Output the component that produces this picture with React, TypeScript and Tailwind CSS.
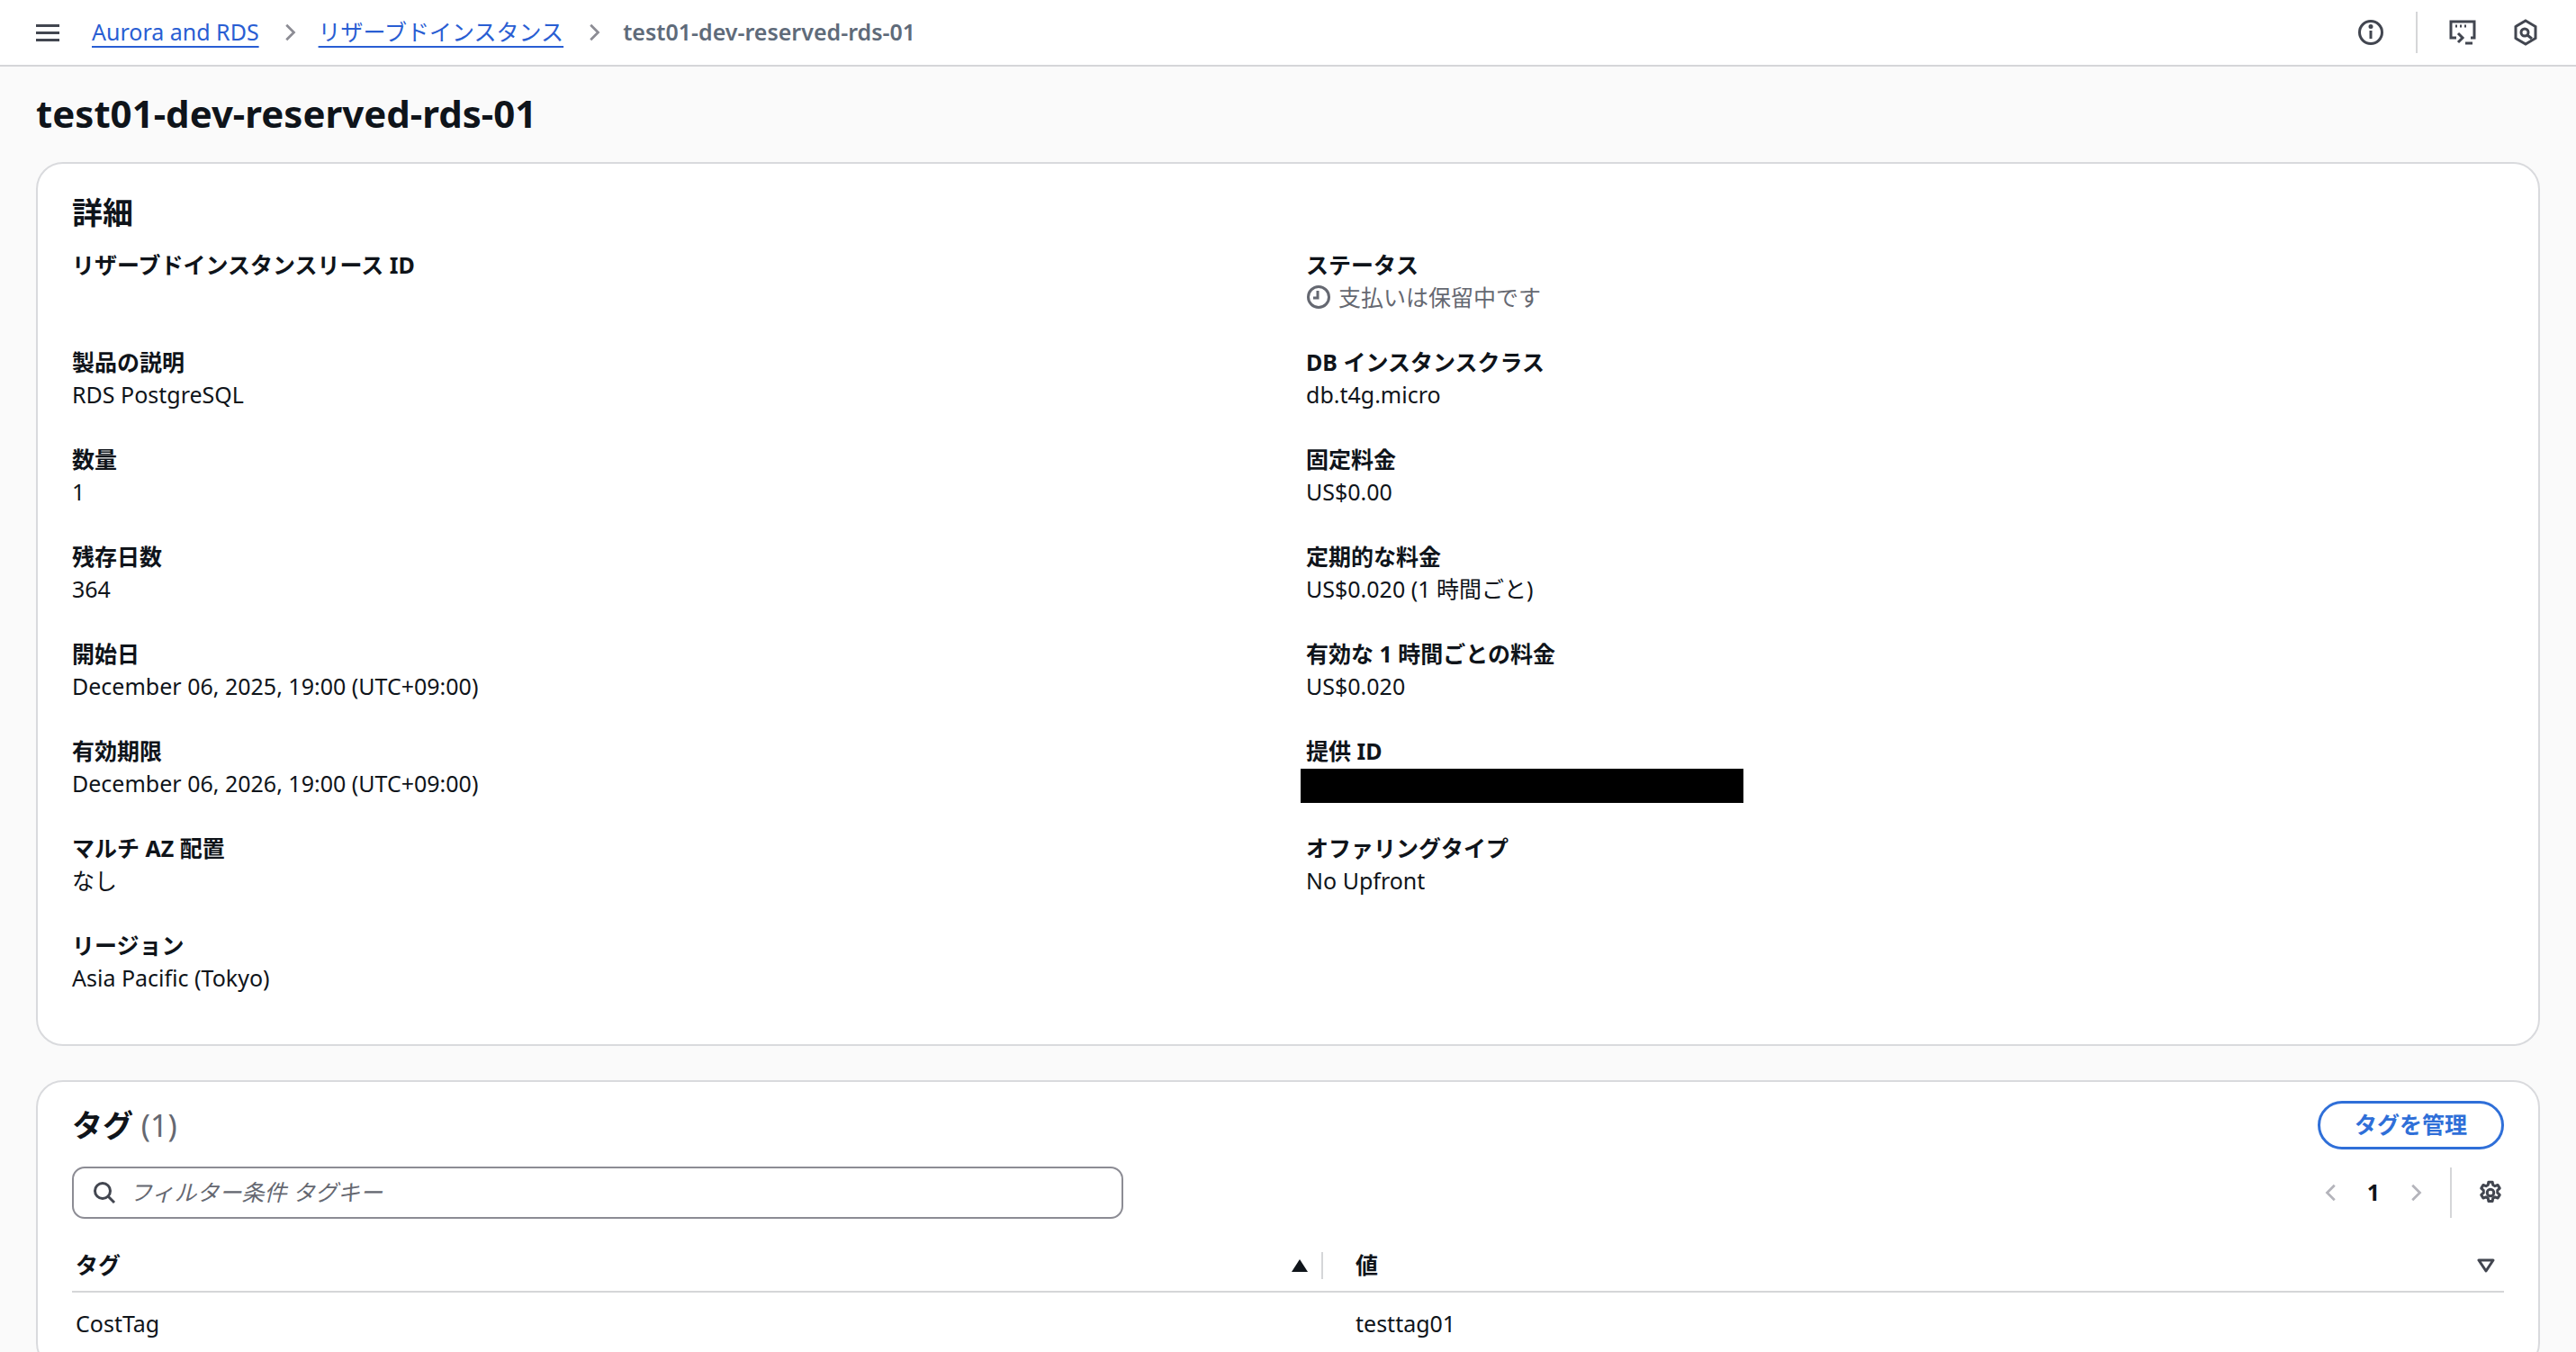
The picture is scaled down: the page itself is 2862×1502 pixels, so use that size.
import React from 'react';

const font = { fontFamily: '"Noto Sans", "Noto Sans CJK JP", sans-serif' };

const left: [string, string][] = [
  ['リザーブドインスタンスリース ID', ''],
  ['製品の説明', 'RDS PostgreSQL'],
  ['数量', '1'],
  ['残存日数', '364'],
  ['開始日', 'December 06, 2025, 19:00 (UTC+09:00)'],
  ['有効期限', 'December 06, 2026, 19:00 (UTC+09:00)'],
  ['マルチ AZ 配置', 'なし'],
  ['リージョン', 'Asia Pacific (Tokyo)'],
];

const right: [string, string][] = [
  ['DB インスタンスクラス', 'db.t4g.micro'],
  ['固定料金', 'US$0.00'],
  ['定期的な料金', 'US$0.020 (1 時間ごと)'],
  ['有効な 1 時間ごとの料金', 'US$0.020'],
];

const Field = ({ label, children }: { label: string; children?: React.ReactNode }) => (
  <div className="h-[108px]">
    <div className="text-[25px] leading-[36px] font-bold text-[#0f141a]">{label}</div>
    <div className="text-[25px] leading-[36px] text-[#0f141a]">{children}</div>
  </div>
);

const Chevron = ({ dir = 'right', color = '#8c8c94' }: { dir?: 'left' | 'right'; color?: string }) => (
  <svg width="22" height="22" viewBox="0 0 16 16" fill="none" stroke={color} strokeWidth="2">
    {dir === 'right' ? <path d="M6 2l6 6-6 6" /> : <path d="M10 2L4 8l6 6" />}
  </svg>
);

export default function App() {
  return (
    <div className="min-h-[1502px] bg-[#fafafa]" style={font}>
      {/* top bar */}
      <div className="h-[74px] bg-white border-b-2 border-[#d5d6d8] flex items-center px-[40px]">
        <svg width="28" height="24" viewBox="0 0 28 24" fill="#424650">
          <rect x="0" y="3" width="26" height="3" />
          <rect x="0" y="11" width="26" height="3" />
          <rect x="0" y="19" width="26" height="3" />
        </svg>
        <div className="flex items-center gap-[22px] ml-[34px] text-[25px]">
          <a className="text-[#295ed3] underline underline-offset-[6px]">Aurora and RDS</a>
          <Chevron />
          <a className="text-[#295ed3] underline underline-offset-[6px]">リザーブドインスタンス</a>
          <Chevron />
          <span className="text-[#5f6b7a] font-semibold">test01-dev-reserved-rds-01</span>
        </div>
        <div className="ml-auto flex items-center h-full">
          <svg width="32" height="32" viewBox="0 0 32 32" fill="none" stroke="#424650" strokeWidth="3">
            <circle cx="16" cy="16" r="12.5" />
            <path d="M16 14v9" />
            <circle cx="16" cy="9.5" r="1" fill="#424650" />
          </svg>
          <div className="w-[2px] h-[46px] bg-[#d5d6d8] mx-[34px]" />
          <svg width="32" height="32" viewBox="0 0 32 32" fill="none" stroke="#424650" strokeWidth="3">
            <path d="M9 22H3V4h26v18h-4" />
            <path d="M8 9h2M13 9h2M18 9h2" />
            <path d="M11 17l5 5-5 5" />
            <path d="M19 28h8" />
          </svg>
          <svg className="ml-[38px]" width="32" height="32" viewBox="0 0 32 32" fill="none" stroke="#424650" strokeWidth="3">
            <path d="M16 3l11 6.5v13L16 29 5 22.5v-13z" />
            <circle cx="15" cy="16" r="4" />
            <path d="M18 19l5 4" />
          </svg>
        </div>
      </div>

      <div className="px-[40px]">
        <h1 className="text-[42px] font-bold text-[#0f141a] leading-[60px] mt-[22px] mb-[24px]">test01-dev-reserved-rds-01</h1>

        {/* details card */}
        <div className="bg-white border-2 border-[#d9dadd] rounded-[30px] px-[38px] pt-[30px] pb-[20px]">
          <h2 className="text-[34px] font-bold text-[#0f141a] leading-[48px] mb-[16px]">詳細</h2>
          <div className="grid grid-cols-2 gap-x-[32px]">
            <div>
              {left.map(([l, v]) => (
                <Field key={l} label={l}>{v}</Field>
              ))}
            </div>
            <div className="pl-[4px]">
              <Field label="ステータス">
                <span className="flex items-center gap-[8px] text-[#656871]">
                  <svg width="28" height="28" viewBox="0 0 28 28" fill="none" stroke="#656871" strokeWidth="3">
                    <circle cx="14" cy="14" r="11.5" />
                    <path d="M13 7v8H8" />
                  </svg>
                  支払いは保留中です
                </span>
              </Field>
              {right.map(([l, v]) => (
                <Field key={l} label={l}>{v}</Field>
              ))}
              <Field label="提供 ID">
                <div className="w-[492px] h-[38px] bg-black -ml-[6px] mt-[2px]" />
              </Field>
              <Field label="オファリングタイプ">No Upfront</Field>
            </div>
          </div>
        </div>

        {/* tags card */}
        <div className="bg-white border-2 border-[#d9dadd] rounded-[30px] px-[38px] pt-[20px] pb-[14px] mt-[38px]">
          <div className="flex items-center justify-between">
            <h2 className="text-[34px] font-bold text-[#0f141a] leading-[56px]">
              タグ <span className="font-normal text-[#656871]">(1)</span>
            </h2>
            <button className="h-[54px] px-[38px] rounded-full border-[3px] border-[#2f6fd8] text-[#2f6fd8] text-[25px] font-bold">
              タグを管理
            </button>
          </div>
          <div className="flex items-center mt-[16px]">
            <div className="w-[1168px] h-[58px] border-2 border-[#8c8c94] rounded-[14px] flex items-center px-[20px] gap-[14px]">
              <svg width="28" height="28" viewBox="0 0 28 28" fill="none" stroke="#424650" strokeWidth="3">
                <circle cx="12" cy="12" r="8.5" />
                <path d="M18 18l7 7" />
              </svg>
              <span className="text-[25px] italic text-[#656871]">フィルター条件 タグキー</span>
            </div>
            <div className="ml-auto flex items-center h-[62px]">
              <Chevron dir="left" color="#b4b4bb" />
              <span className="text-[25px] font-bold text-[#0f141a] mx-[28px]">1</span>
              <Chevron color="#b4b4bb" />
              <div className="w-[2px] h-[56px] bg-[#d5d6d8] mx-[28px]" />
              <svg width="30" height="30" viewBox="0 0 24 24" fill="none" stroke="#424650" strokeWidth="2.4" strokeLinejoin="round">
                <path d="M10.3 2.5h3.4l.5 2.6 1.8 1 2.5-.9 1.7 2.9-2 1.8v2.2l2 1.8-1.7 2.9-2.5-.9-1.8 1-.5 2.6h-3.4l-.5-2.6-1.8-1-2.5.9-1.7-2.9 2-1.8v-2.2l-2-1.8 1.7-2.9 2.5.9 1.8-1z" />
                <circle cx="12" cy="12" r="3" />
              </svg>
            </div>
          </div>
          <div className="mt-[22px]">
            <div className="flex items-center h-[58px] border-b-2 border-[#d5d6d8] text-[25px] font-bold text-[#0f141a]">
              <div className="w-[1388px] pl-[4px] flex items-center">
                <span>タグ</span>
                <svg className="ml-auto mr-[14px]" width="20" height="16" viewBox="0 0 20 16" fill="#0f141a">
                  <path d="M10 1l9 14H1z" />
                </svg>
              </div>
              <div className="w-[2px] h-[30px] bg-[#d5d6d8]" />
              <div className="flex-1 pl-[36px] flex items-center">
                <span>値</span>
                <svg className="ml-auto mr-[10px]" width="20" height="16" viewBox="0 0 20 16" fill="none" stroke="#424650" strokeWidth="3" strokeLinejoin="round">
                  <path d="M2 2h16L10 14z" />
                </svg>
              </div>
            </div>
            <div className="flex items-center h-[70px] text-[25px] text-[#0f141a]">
              <div className="w-[1390px] pl-[4px]">CostTag</div>
              <div className="pl-[36px]">testtag01</div>
            </div>
          </div>
        </div>
      </div>
    </div>
  );
}
